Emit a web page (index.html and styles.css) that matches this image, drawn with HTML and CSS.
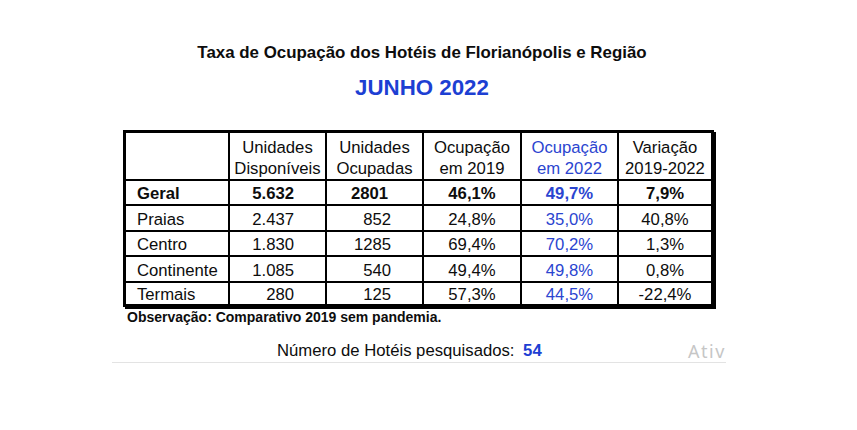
FILE: index.html
```html
<!DOCTYPE html>
<html lang="pt-BR">
<head>
<meta charset="utf-8">
<title>Taxa de Ocupação - Junho 2022</title>
<link rel="stylesheet" href="styles.css">
</head>
<body>
<div class="page">
  <header class="heading">
    <h1 class="title">Taxa de Ocupação dos Hotéis de Florianópolis e Região</h1>
    <h2 class="month">JUNHO 2022</h2>
  </header>
  <table class="occ">
    <colgroup>
      <col class="c1"><col class="c2"><col class="c3"><col class="c4"><col class="c5"><col class="c6">
    </colgroup>
    <thead>
      <tr>
        <th></th>
        <th>Unidades<br>Disponíveis</th>
        <th>Unidades<br>Ocupadas</th>
        <th>Ocupação<br>em 2019</th>
        <th class="blue">Ocupação<br>em 2022</th>
        <th>Variação<br>2019-2022</th>
      </tr>
    </thead>
    <tbody>
      <tr class="total">
        <td class="label">Geral</td>
        <td class="num">5.632</td>
        <td class="num num-b">2801</td>
        <td>46,1%</td>
        <td class="blue">49,7%</td>
        <td>7,9%</td>
      </tr>
      <tr>
        <td class="label">Praias</td>
        <td class="num">2.437</td>
        <td class="num">852</td>
        <td>24,8%</td>
        <td class="blue">35,0%</td>
        <td>40,8%</td>
      </tr>
      <tr>
        <td class="label">Centro</td>
        <td class="num">1.830</td>
        <td class="num">1285</td>
        <td>69,4%</td>
        <td class="blue">70,2%</td>
        <td>1,3%</td>
      </tr>
      <tr>
        <td class="label">Continente</td>
        <td class="num">1.085</td>
        <td class="num">540</td>
        <td>49,4%</td>
        <td class="blue">49,8%</td>
        <td>0,8%</td>
      </tr>
      <tr class="last">
        <td class="label">Termais</td>
        <td class="num">280</td>
        <td class="num">125</td>
        <td>57,3%</td>
        <td class="blue">44,5%</td>
        <td>-22,4%</td>
      </tr>
    </tbody>
  </table>
  <p class="note">Observação: Comparativo 2019 sem pandemia.</p>
  <div class="count">
    <p class="count-text">Número de Hotéis pesquisados: <strong class="count-num">54</strong></p>
    <span class="watermark">Ativar o Windows</span>
  </div>
</div>
</body>
</html>
```
FILE: styles.css
```css
html, body {
  margin: 0;
  background: #fff;
}
body {
  font-family: "Liberation Sans", Arial, sans-serif;
  color: #0d0d0d;
}
.page {
  padding: 43px 0 0 123px;
}
.heading {
  width: 598px;
  text-align: center;
}
.title {
  margin: 0;
  font-size: 16.9px;
  line-height: 20px;
  font-weight: bold;
}
.month {
  margin: 12px 0 0;
  font-size: 22.3px;
  line-height: 26px;
  font-weight: bold;
  color: #1d3fd3;
}
.occ {
  margin-top: 29px;
  box-sizing: border-box;
  width: 591px;
  table-layout: fixed;
  border-collapse: separate;
  border-spacing: 0;
  border: 3px solid #000;
  box-shadow: 2px 2px 0 #000;
  font-size: 16.7px;
}
.c1 { width: 104px; }
.c2 { width: 97px; }
.c3 { width: 97px; }
.c4 { width: 98px; }
.c5 { width: 97px; }
.c6 { width: 92px; }
.occ th,
.occ td {
  box-sizing: border-box;
  padding: 3.5px 0 0;
  line-height: 20px;
  border-right: 2px solid #000;
  border-bottom: 2px solid #000;
  text-align: center;
  font-weight: normal;
  vertical-align: top;
  white-space: nowrap;
}
.occ th {
  line-height: 21px;
}
.occ th:last-child,
.occ td:last-child {
  border-right: 0;
}
.occ .last td {
  border-bottom: 0;
  line-height: 18px;
}
.occ .label {
  text-align: left;
  padding-left: 11px;
}
.occ .num {
  text-align: right;
  padding-right: 31px;
}
.occ .num-b {
  padding-right: 34px;
}
.occ .total td {
  font-weight: bold;
}
.occ .blue {
  color: #2b45d0;
}
.note {
  margin: 2px 0 0 4px;
  font-size: 14px;
  line-height: 16px;
  font-weight: bold;
}
.count {
  position: relative;
  overflow: hidden;
  width: 614px;
  margin: 16px 0 0 -11px;
  padding: 0 0 1px 165px;
  box-sizing: border-box;
  border-bottom: 1px solid #e3e3e3;
}
.count-text {
  margin: 0;
  font-size: 16.7px;
  line-height: 20px;
}
.count-num {
  margin-left: 4px;
  color: #1d3fd3;
}
.watermark {
  position: absolute;
  left: 576px;
  top: -1px;
  font-family: "Noto Sans", "Open Sans", sans-serif;
  font-size: 18px;
  line-height: 22px;
  letter-spacing: 1.5px;
  color: #c6c6c6;
  white-space: nowrap;
}
```
